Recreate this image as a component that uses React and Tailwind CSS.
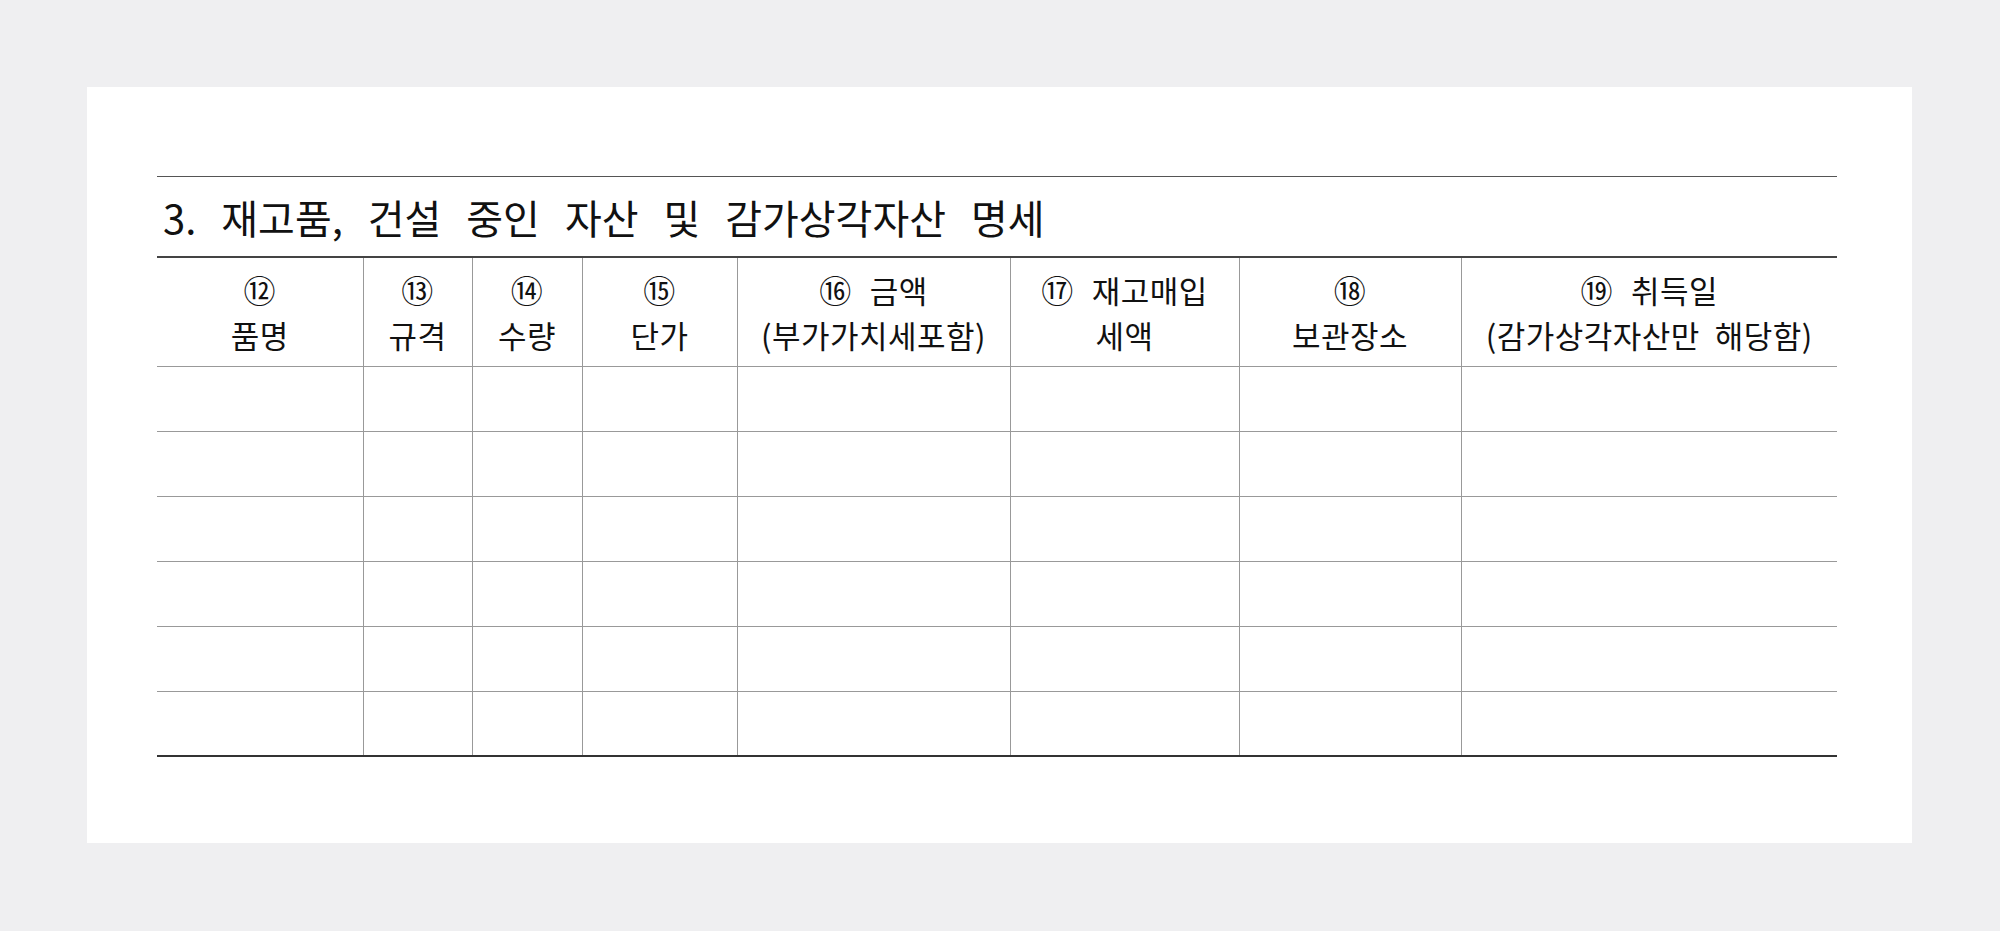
const cols = [206, 109, 110, 155, 273, 229, 222, 376];

const heads = [
  { num: "⑫", top: "", bottom: "품명" },
  { num: "⑬", top: "", bottom: "규격" },
  { num: "⑭", top: "", bottom: "수량" },
  { num: "⑮", top: "", bottom: "단가" },
  { num: "⑯", top: "금액", bottom: "(부가가치세포함)" },
  { num: "⑰", top: "재고매입", bottom: "세액" },
  { num: "⑱", top: "", bottom: "보관장소" },
  { num: "⑲", top: "취득일", bottom: "(감가상각자산만  해당함)" },
];

export default function App() {
  return (
    <div
      className="min-h-[931px] bg-[#efeff1] pt-[87px] pl-[87px]"
      style={{ fontFamily: '"Noto Sans CJK KR", "Noto Sans", sans-serif' }}
    >
      <div className="w-[1825px] h-[756px] bg-white pt-[89px] pl-[70px]">
        <div className="w-[1680px]">
          <div className="h-[80px] border-t-[1.5px] border-[#555] flex items-center pl-[6px] text-[40px] text-[#111] [word-spacing:16px]">
            3. 재고품, 건설 중인 자산 및 감가상각자산 명세
          </div>
          <table className="w-[1680px] table-fixed border-collapse">
            <colgroup>
              {cols.map((w, i) => (
                <col key={i} style={{ width: w }} />
              ))}
            </colgroup>
            <thead>
              <tr className="h-[109px] border-t-2 border-[#444]">
                {heads.map((h, i) => (
                  <th
                    key={i}
                    className={`p-0 font-normal text-[31px] tracking-[0.5px] text-[#111] border-b border-[#999] whitespace-pre ${
                      i < cols.length - 1 ? "border-r" : ""
                    }`}
                  >
                    <div className="h-[45px] flex items-center justify-center">
                      <span className="text-[32px] leading-[45px]">{h.num}</span>
                      {h.top ? <span className="ml-[18px] leading-[45px]">{h.top}</span> : null}
                    </div>
                    <div className="h-[45px] leading-[45px]">{h.bottom}</div>
                  </th>
                ))}
              </tr>
            </thead>
            <tbody>
              {[0, 1, 2, 3, 4, 5].map((r) => (
                <tr key={r} className={`h-[65px] ${r === 5 ? "border-b-2 border-[#333]" : ""}`}>
                  {cols.map((_, i) => (
                    <td
                      key={i}
                      className={`p-0 border-[#999] ${r < 5 ? "border-b" : ""} ${
                        i < cols.length - 1 ? "border-r" : ""
                      }`}
                    ></td>
                  ))}
                </tr>
              ))}
            </tbody>
          </table>
        </div>
      </div>
    </div>
  );
}
